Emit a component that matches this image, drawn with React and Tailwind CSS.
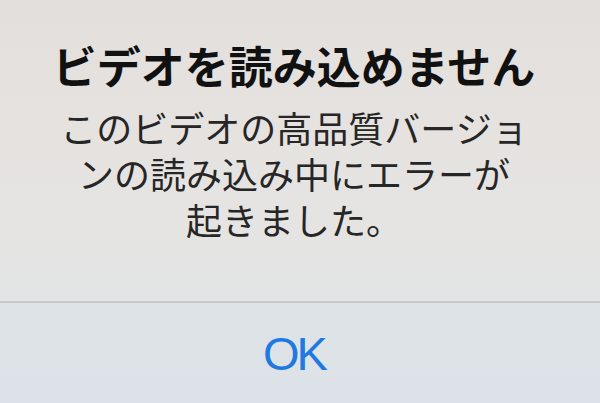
import React from "react";

const App = () => {
    return (
        <div
            className="w-[600px] h-[403px] flex flex-col overflow-hidden bg-gradient-to-b from-[#e3dfdc] via-[#e6e4e2] to-[#dfe4e8]"
            style={{ fontFamily: '"Noto Sans CJK JP", "Noto Sans", sans-serif' }}
        >
            <div className="h-[301px] flex flex-col items-center pr-[12px] pt-[38px]">
                <h1 className="text-[44px] leading-[54px] font-bold text-[#111]">
                    ビデオを読み込めません
                </h1>
                <p className="mt-[12px] text-[36px] leading-[46px] text-[#262626] text-center w-[480px]">
                    このビデオの高品質バージョ
                    <br />
                    ンの読み込み中にエラーが
                    <br />
                    起きました。
                </p>
            </div>
            <div className="h-[2px] bg-[#c9c9cb]" />
            <div className="flex-1 flex items-center justify-center pr-[12px] bg-gradient-to-b from-[#dee3e7] to-[#dce2e7]">
                <button
                    className="text-[47px] text-[#1f7ae0] leading-none tracking-[-3px]"
                    style={{ fontFamily: '"Liberation Sans", Arial, sans-serif' }}
                >
                    OK
                </button>
            </div>
        </div>
    );
};

export default App;
